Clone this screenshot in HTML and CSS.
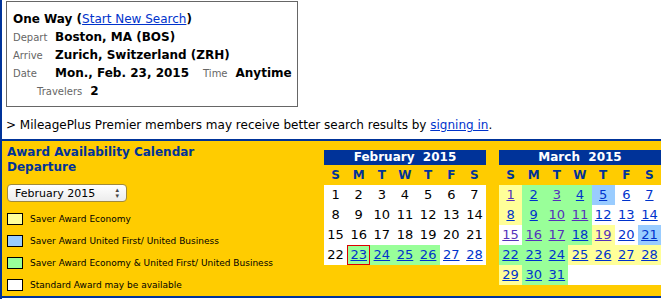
FILE: index.html
```html
<!DOCTYPE html>
<html lang="en">
<head>
  <meta charset="UTF-8">
  <title>Award Availability Calendar</title>
  <link rel="stylesheet" href="styles.css">
</head>
<body>
  <div class="page">
    <div class="summary">
      <div class="trip-title">One Way (<a href="#">Start New Search</a>)</div>
      <div class="trip-row"><span class="lbl">Depart</span><span class="val">Boston, MA (BOS)</span></div>
      <div class="trip-row"><span class="lbl">Arrive</span><span class="val">Zurich, Switzerland (ZRH)</span></div>
      <div class="trip-row"><span class="lbl">Date</span><span class="val">Mon., Feb. 23, 2015</span><span class="lbl time">Time</span><span class="val">Anytime</span></div>
      <div class="trip-row travelers"><span class="lbl">Travelers</span><span class="val">2</span></div>
    </div>

    <p class="notice">&gt; MileagePlus Premier members may receive better search results by <a href="#">signing in</a>.</p>

    <div class="award">
      <div class="award-side">
        <h3>Award Availability Calendar<br>Departure</h3>
        <div class="select-wrap">
          <select class="month-select">
            <option>February 2015</option>
            <option>March 2015</option>
          </select>
        </div>
        <ul class="legend">
          <li><span class="swatch economy"></span>Saver Award Economy</li>
          <li><span class="swatch business"></span>Saver Award United First/ United Business</li>
          <li><span class="swatch both"></span>Saver Award Economy &amp; United First/ United Business</li>
          <li><span class="swatch standard"></span>Standard Award may be available</li>
        </ul>
      </div>

      <div class="cal">
        <div class="cal-head">February&nbsp; 2015</div>
        <div class="cal-dow"><span>S</span><span>M</span><span>T</span><span>W</span><span>T</span><span>F</span><span>S</span></div>
        <div class="cal-days">
          <span>1</span><span>2</span><span>3</span><span>4</span><span>5</span><span>6</span><span>7</span>
          <span>8</span><span>9</span><span>10</span><span>11</span><span>12</span><span>13</span><span>14</span>
          <span>15</span><span>16</span><span>17</span><span>18</span><span>19</span><span>20</span><span>21</span>
          <span>22</span>
          <span class="both selected"><a href="#">23</a></span>
          <span class="both"><a href="#">24</a></span>
          <span class="both"><a href="#">25</a></span>
          <span class="both"><a href="#">26</a></span>
          <span><a href="#">27</a></span>
          <span><a href="#">28</a></span>
        </div>
      </div>

      <div class="cal">
        <div class="cal-head">March&nbsp; 2015</div>
        <div class="cal-dow"><span>S</span><span>M</span><span>T</span><span>W</span><span>T</span><span>F</span><span>S</span></div>
        <div class="cal-days">
          <span class="economy"><a class="seen" href="#">1</a></span>
          <span class="both"><a href="#">2</a></span>
          <span class="both"><a class="seen" href="#">3</a></span>
          <span class="both"><a href="#">4</a></span>
          <span class="business"><a href="#">5</a></span>
          <span><a href="#">6</a></span>
          <span><a href="#">7</a></span>

          <span class="economy"><a href="#">8</a></span>
          <span class="both"><a href="#">9</a></span>
          <span class="both"><a class="seen" href="#">10</a></span>
          <span class="both"><a class="seen" href="#">11</a></span>
          <span><a href="#">12</a></span>
          <span><a href="#">13</a></span>
          <span><a href="#">14</a></span>

          <span><a class="seen" href="#">15</a></span>
          <span class="both"><a class="seen" href="#">16</a></span>
          <span class="both"><a class="seen" href="#">17</a></span>
          <span class="both"><a href="#">18</a></span>
          <span class="economy"><a class="seen" href="#">19</a></span>
          <span><a href="#">20</a></span>
          <span class="business"><a href="#">21</a></span>

          <span class="both"><a href="#">22</a></span>
          <span class="both"><a href="#">23</a></span>
          <span class="both"><a href="#">24</a></span>
          <span class="economy"><a href="#">25</a></span>
          <span class="economy"><a href="#">26</a></span>
          <span class="economy"><a href="#">27</a></span>
          <span class="economy"><a href="#">28</a></span>

          <span class="economy"><a href="#">29</a></span>
          <span class="both"><a href="#">30</a></span>
          <span class="both"><a href="#">31</a></span>
          <span></span><span></span><span></span><span></span>
        </div>
      </div>
    </div>
  </div>
</body>
</html>
```

FILE: styles.css
```css
body {
  margin: 0;
  font-family: "DejaVu Sans", Verdana, sans-serif;
  background-color: #fff;
  color: #000;
}
a {
  color: #0033cc;
}
.page {
  border-left: 2px solid #003399;
  height: 299px;
  overflow: hidden;
}
.summary {
  width: 284px;
  margin: 1px 0 0 4px;
  padding: 8px 0 6px 6px;
  border: 1px solid #666;
}
.trip-title {
  height: 18px;
  font-size: 12px;
  font-weight: bold;
  line-height: 18px;
}
.trip-title a {
  font-weight: normal;
}
.trip-row {
  display: flex;
  align-items: baseline;
  height: 18px;
  line-height: 18px;
  white-space: nowrap;
}
.lbl {
  width: 42px;
  font-size: 10px;
  color: #666;
}
.val {
  font-size: 12px;
  font-weight: bold;
}
.lbl.time {
  width: auto;
  margin: 0 8px 0 14px;
}
.travelers {
  padding-left: 24px;
}
.travelers .lbl {
  width: auto;
  margin-right: 8px;
}
.notice {
  margin: 8px 0 0 4px;
  font-size: 12px;
  line-height: 20px;
  height: 24px;
}
.award {
  display: flex;
  align-items: flex-start;
  height: 155px;
  background-color: #ffcc00;
  border-top: 2px solid #003399;
  border-bottom: 2px solid #003399;
}
.award-side {
  flex: none;
  width: 317px;
  padding: 4px 0 0 5px;
}
.award-side h3 {
  margin: 0;
  font-size: 12px;
  line-height: 15px;
  color: #003399;
}
.select-wrap {
  position: relative;
  width: 120px;
  margin-top: 9px;
}
.select-wrap::after {
  content: "\25B4\A\25BE";
  white-space: pre;
  position: absolute;
  top: 3px;
  right: 8px;
  font-size: 7px;
  line-height: 6px;
  color: #444;
  pointer-events: none;
}
.month-select {
  display: block;
  width: 120px;
  height: 18px;
  padding: 0 0 0 7px;
  appearance: none;
  -webkit-appearance: none;
  font-family: "DejaVu Sans", Verdana, sans-serif;
  font-size: 11px;
  color: #000;
  border: 1px solid #a08a3c;
  border-radius: 4px;
  background: linear-gradient(#ffffff, #ececec);
}
.legend {
  list-style: none;
  margin: 6px 0 0;
  padding: 0;
}
.legend li {
  display: flex;
  align-items: center;
  height: 22px;
  font-size: 9px;
  white-space: nowrap;
}
.swatch {
  width: 14px;
  height: 10px;
  margin-right: 7px;
  border: 1px solid #000;
}
.economy {
  background-color: #ffff99;
}
.business {
  background-color: #99ccff;
}
.both {
  background-color: #99ff99;
}
.standard {
  background-color: #fff;
}
.cal {
  flex: none;
  width: 162px;
  margin-top: 9px;
  margin-right: 13px;
}
.cal-head {
  height: 15px;
  line-height: 15px;
  background-color: #003399;
  color: #fff;
  font-size: 12px;
  font-weight: bold;
  text-align: center;
}
.cal-dow,
.cal-days {
  display: grid;
  grid-template-columns: repeat(7, 1fr);
  text-align: center;
}
.cal-dow span {
  height: 20px;
  line-height: 20px;
  font-size: 12px;
  font-weight: bold;
  color: #003399;
}
.cal-days {
  background-color: #fff;
}
.cal-days span {
  height: 20px;
  line-height: 20px;
  font-size: 13px;
  box-sizing: border-box;
}
.cal-days .selected {
  border: 1px solid #dd0000;
  line-height: 18px;
}
.cal-days a.seen {
  color: #5533bb;
}
```
